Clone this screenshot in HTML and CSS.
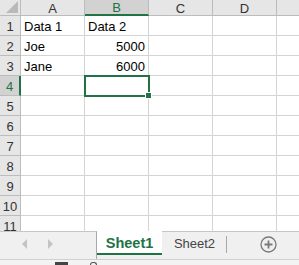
FILE: index.html
```html
<!DOCTYPE html>
<html lang="en">

<head>
    <meta charset="UTF-8">
    <title>Book1</title>
    <link rel="stylesheet" href="styles.css">
</head>

<body>
    <div class="sheet">
        <div class="grid">
            <div class="corner"><span class="tri"></span></div>
            <div class="colhead">A</div>
            <div class="colhead active">B</div>
            <div class="colhead">C</div>
            <div class="colhead">D</div>
            <div class="colhead"></div>

            <div class="rowhead">1</div>
            <div class="cell">Data 1</div>
            <div class="cell">Data 2</div>
            <div class="cell"></div>
            <div class="cell"></div>
            <div class="cell"></div>

            <div class="rowhead">2</div>
            <div class="cell">Joe</div>
            <div class="cell num">5000</div>
            <div class="cell"></div>
            <div class="cell"></div>
            <div class="cell"></div>

            <div class="rowhead">3</div>
            <div class="cell">Jane</div>
            <div class="cell num">6000</div>
            <div class="cell"></div>
            <div class="cell"></div>
            <div class="cell"></div>

            <div class="rowhead active">4</div>
            <div class="cell"></div>
            <div class="cell"></div>
            <div class="cell"></div>
            <div class="cell"></div>
            <div class="cell"></div>

            <div class="rowhead">5</div>
            <div class="cell"></div><div class="cell"></div><div class="cell"></div><div class="cell"></div><div class="cell"></div>
            <div class="rowhead">6</div>
            <div class="cell"></div><div class="cell"></div><div class="cell"></div><div class="cell"></div><div class="cell"></div>
            <div class="rowhead">7</div>
            <div class="cell"></div><div class="cell"></div><div class="cell"></div><div class="cell"></div><div class="cell"></div>
            <div class="rowhead">8</div>
            <div class="cell"></div><div class="cell"></div><div class="cell"></div><div class="cell"></div><div class="cell"></div>
            <div class="rowhead">9</div>
            <div class="cell"></div><div class="cell"></div><div class="cell"></div><div class="cell"></div><div class="cell"></div>
            <div class="rowhead">10</div>
            <div class="cell"></div><div class="cell"></div><div class="cell"></div><div class="cell"></div><div class="cell"></div>
            <div class="rowhead">11</div>
            <div class="cell"></div><div class="cell"></div><div class="cell"></div><div class="cell"></div><div class="cell"></div>
        </div>
        <!-- active cell B4 -->
        <div class="selection"><span class="handle"></span></div>
    </div>

    <div class="tabbar">
        <div class="nav">
            <span class="arrow left"></span>
            <span class="arrow right"></span>
        </div>
        <div class="tab current">Sheet1</div>
        <div class="tab">Sheet2</div>
        <div class="spacer"></div>
        <div class="add">
            <svg width="17" height="17" viewBox="0 0 17 17">
                <circle cx="8.5" cy="8.5" r="7.5" fill="none" stroke="#7a7a7a" stroke-width="1.3" />
                <path d="M8.5 4.5v8M4.5 8.5h8" stroke="#7a7a7a" stroke-width="1.8" />
            </svg>
        </div>
    </div>

    <div class="statusbar">
        <span class="mark"></span>
        <span class="mark small"></span>
    </div>
</body>

</html>
```

FILE: styles.css
```css
body {
    margin: 0;
    width: 299px;
    height: 265px;
    overflow: hidden;
    background-color: #ffffff;
    font-family: 'Liberation Sans', Arial, sans-serif;
    font-size: 13px;
    color: #000;
}

.sheet {
    position: relative;
    height: 231px;
    overflow: hidden;
}

.grid {
    display: grid;
    grid-template-columns: 21px 64px 64px 64px 64px 40px;
    grid-template-rows: 16px repeat(11, 20px);
}

.grid > div {
    box-sizing: border-box;
    display: flex;
    align-items: center;
    overflow: hidden;
    white-space: nowrap;
}

.corner {
    position: relative;
    background-color: #e6e6e6;
    border-right: 1px solid #bcbcbc;
    border-bottom: 1px solid #bcbcbc;
}

.corner .tri {
    position: absolute;
    right: 2px;
    bottom: 2px;
    width: 0;
    height: 0;
    border-left: 12px solid transparent;
    border-bottom: 12px solid #b9b9b9;
}

.colhead {
    justify-content: center;
    background-color: #e6e6e6;
    border-right: 1px solid #bcbcbc;
    border-bottom: 1px solid #bcbcbc;
    color: #333;
    padding-top: 1px;
}

.colhead.active {
    background-color: #d2d2d2;
    color: #217346;
    border-bottom: 2px solid #217346;
}

.rowhead {
    justify-content: center;
    background-color: #e6e6e6;
    border-right: 1px solid #bcbcbc;
    border-bottom: 1px solid #bcbcbc;
    color: #333;
    padding-top: 1px;
}

.rowhead.active {
    background-color: #d2d2d2;
    color: #217346;
    border-right: 2px solid #217346;
}

.cell {
    border-right: 1px solid #d4d4d4;
    border-bottom: 1px solid #d4d4d4;
    padding: 1px 3px 0 3px;
}

.cell.num {
    justify-content: flex-end;
}

.selection {
    position: absolute;
    left: 84px;
    top: 75px;
    width: 66px;
    height: 22px;
    box-sizing: border-box;
    border: 2px solid #217346;
}

.selection .handle {
    position: absolute;
    right: -4px;
    bottom: -4px;
    width: 5px;
    height: 5px;
    background-color: #217346;
    border: 1px solid #ffffff;
}

.tabbar {
    display: flex;
    height: 28px;
    background-color: #f0f0f0;
}

.nav {
    width: 97px;
    box-sizing: border-box;
    border-top: 1px solid #c6c6c6;
    border-right: 1px solid #a8a8a8;
    display: flex;
    align-items: center;
    padding: 0 0 4px 22px;
    gap: 21px;
}

.arrow {
    width: 0;
    height: 0;
    border-top: 5px solid transparent;
    border-bottom: 5px solid transparent;
}

.arrow.left {
    border-right: 5px solid #c3c3c3;
}

.arrow.right {
    border-left: 5px solid #c3c3c3;
}

.tab {
    width: 65px;
    height: 24px;
    box-sizing: border-box;
    display: flex;
    align-items: center;
    justify-content: center;
    color: #444;
    border-top: 1px solid #c6c6c6;
    position: relative;
}

.tab::after {
    content: "";
    position: absolute;
    right: 0;
    top: 4px;
    height: 17px;
    border-right: 1px solid #a8a8a8;
}

.tab.current {
    background-color: #ffffff;
    border-top: none;
    border-bottom: 2px solid #217346;
    color: #217346;
    font-weight: bold;
    font-size: 14.5px;
    padding-top: 1px;
}

.tab.current::after {
    display: none;
}

.spacer {
    flex: 1;
    border-top: 1px solid #c6c6c6;
}

.add {
    width: 62px;
    box-sizing: border-box;
    border-top: 1px solid #c6c6c6;
    display: flex;
    justify-content: center;
    padding-top: 4px;
}

.statusbar {
    height: 6px;
    border-top: 1px solid #d0d0d0;
    background-color: #f3f3f3;
    position: relative;
}

.mark {
    position: absolute;
    left: 55px;
    top: 2px;
    width: 13px;
    height: 4px;
    background-color: #444;
}

.mark.small {
    left: 90px;
    top: 2px;
    width: 5px;
    height: 4px;
    border-radius: 3px 3px 0 0;
    background-color: transparent;
    border: 1px solid #555;
    border-bottom: none;
}
```
